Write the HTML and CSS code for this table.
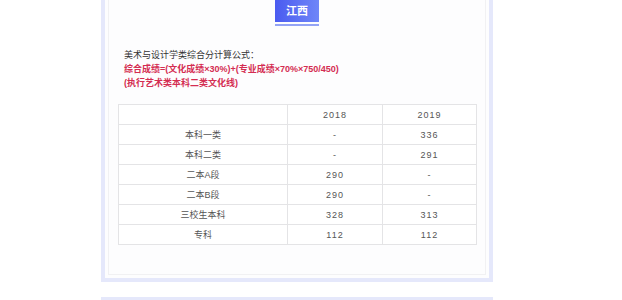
FILE: index.html
```html
<!DOCTYPE html>
<html lang="zh">
<head>
<meta charset="utf-8">
<link rel="stylesheet" href="styles.css">
</head>
<body>
<div class="page">
  <section class="card">
    <div class="inner">
      <div class="tab-wrap">
        <div class="tab">江西</div>
        <div class="tab-line"></div>
      </div>
      <div class="formula">
        <p class="title">美术与设计学类综合分计算公式：</p>
        <p class="red">综合成绩=(文化成绩×30%)+(专业成绩×70%×750/450)</p>
        <p class="red">(执行艺术类本科二类文化线)</p>
      </div>
      <table class="scores">
        <colgroup><col class="c1"><col class="c2"><col class="c3"></colgroup>
        <tr><td></td><td class="num">2018</td><td class="num">2019</td></tr>
        <tr><td>本科一类</td><td class="num">-</td><td class="num">336</td></tr>
        <tr><td>本科二类</td><td class="num">-</td><td class="num">291</td></tr>
        <tr><td>二本A段</td><td class="num">290</td><td class="num">-</td></tr>
        <tr><td>二本B段</td><td class="num">290</td><td class="num">-</td></tr>
        <tr><td>三校生本科</td><td class="num">328</td><td class="num">313</td></tr>
        <tr><td>专科</td><td class="num">112</td><td class="num">112</td></tr>
      </table>
    </div>
  </section>
  <div class="next"></div>
</div>
</body>
</html>
```
FILE: styles.css
```css
html, body { margin: 0; padding: 0; background: #ffffff; overflow: hidden; }
body { font-family: "Liberation Sans", "Noto Sans CJK SC", sans-serif; color: #333; }
.page { width: 392px; margin-left: 101px; }
.card {
  box-sizing: border-box;
  width: 392px;
  margin-top: -30px;
  border: 4px solid #e5e8fb;
  background: #fdfdfe;
  padding: 3px;
}
.inner {
  border: 1px solid #f1f1f3;
  padding: 22px 0 29px;
}
.tab-wrap { display: flex; flex-direction: column; align-items: center; }
.tab {
  width: 44px;
  height: 22px;
  line-height: 22px;
  text-align: center;
  color: #fff;
  font-weight: bold;
  font-size: 11px;
  background: linear-gradient(90deg, #4a5bf0, #6f86f8);
}
.tab-line { width: 44px; height: 2px; margin-top: 2px; background: #93a3f5; }
.formula { margin: 22px 0 0 15px; font-size: 9px; line-height: 14px; }
.formula p { margin: 0; }
.title { color: #333; }
.red { color: #d42d52; font-weight: bold; }
.scores {
  margin: 14px 0 0 9px;
  width: 358px;
  border-collapse: collapse;
  table-layout: fixed;
  font-size: 9px;
  color: #555;
}
.c1 { width: 169px; }
.c2 { width: 95px; }
.c3 { width: 94px; }
.scores td {
  border: 1px solid #e4e4e6;
  height: 19px;
  padding: 0;
  text-align: center;
  background: #fff;
}
.num { letter-spacing: 1px; }
.next { margin-top: 15px; height: 3px; background: #e5e8fb; }
```
